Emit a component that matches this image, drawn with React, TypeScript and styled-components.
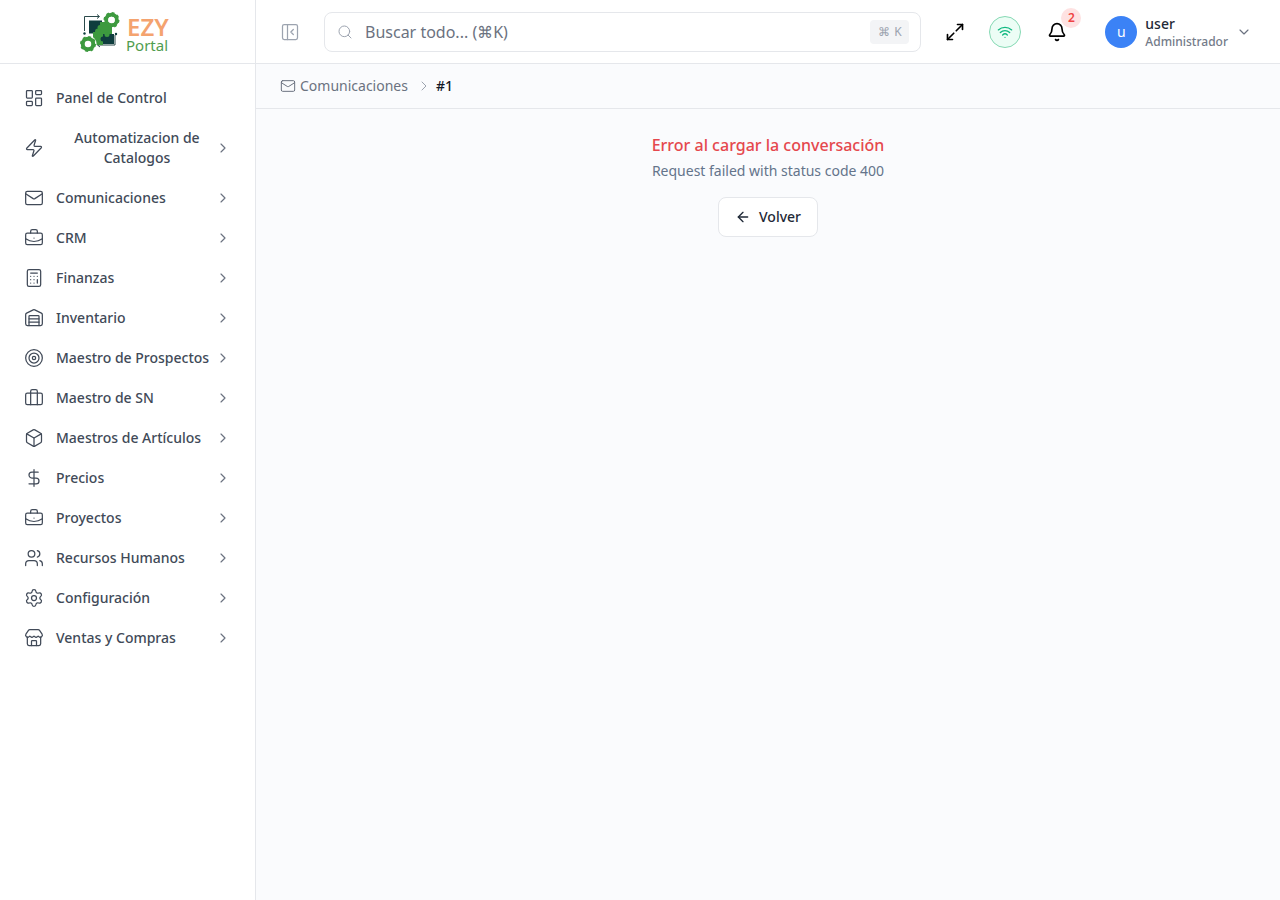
import styled, { createGlobalStyle } from 'styled-components';
import {
  ArrowLeft,
  Bell,
  Box,
  Briefcase,
  BriefcaseBusiness,
  Calculator,
  ChevronDown,
  ChevronRight,
  DollarSign,
  LayoutDashboard,
  LucideIcon,
  Mail,
  PanelLeftClose,
  Search,
  Settings,
  Store,
  Target,
  Users,
  Warehouse,
  Wifi,
  Zap,
} from 'lucide-react';

interface NavEntry {
  label: string;
  icon: LucideIcon;
  hasChildren?: boolean;
}

const navEntries: NavEntry[] = [
  { label: 'Panel de Control', icon: LayoutDashboard },
  { label: 'Automatizacion de Catalogos', icon: Zap, hasChildren: true },
  { label: 'Comunicaciones', icon: Mail, hasChildren: true },
  { label: 'CRM', icon: BriefcaseBusiness, hasChildren: true },
  { label: 'Finanzas', icon: Calculator, hasChildren: true },
  { label: 'Inventario', icon: Warehouse, hasChildren: true },
  { label: 'Maestro de Prospectos', icon: Target, hasChildren: true },
  { label: 'Maestro de SN', icon: Briefcase, hasChildren: true },
  { label: 'Maestros de Artículos', icon: Box, hasChildren: true },
  { label: 'Precios', icon: DollarSign, hasChildren: true },
  { label: 'Proyectos', icon: BriefcaseBusiness, hasChildren: true },
  { label: 'Recursos Humanos', icon: Users, hasChildren: true },
  { label: 'Configuración', icon: Settings, hasChildren: true },
  { label: 'Ventas y Compras', icon: Store, hasChildren: true },
];

const GlobalStyle = createGlobalStyle`
  * {
    box-sizing: border-box;
  }

  html,
  body {
    margin: 0;
    height: 100%;
    font-family: 'Noto Sans', 'Liberation Sans', sans-serif;
    background: #fafbfd;
  }
`;

const Layout = styled.div`
  display: flex;
  width: 100%;
  height: 900px;
  overflow: hidden;
`;

const Sidebar = styled.aside`
  width: 256px;
  flex-shrink: 0;
  background: #ffffff;
  border-right: 1px solid #e5e7eb;
  display: flex;
  flex-direction: column;
`;

const LogoBar = styled.div`
  height: 64px;
  border-bottom: 1px solid #e5e7eb;
  display: flex;
  align-items: center;
  justify-content: center;
  padding-right: 7px;
`;

const LogoWord = styled.text<{ $green?: boolean }>`
  font-family: 'Noto Sans', 'Liberation Sans', sans-serif;
  font-size: ${({ $green }) => ($green ? '15px' : '24px')};
  font-weight: ${({ $green }) => ($green ? 400 : 600)};
  fill: ${({ $green }) => ($green ? '#4f9d4f' : '#f4a36f')};
`;

const Nav = styled.nav`
  display: flex;
  flex-direction: column;
  padding: 14px 12px;
`;

const NavItem = styled.div`
  display: flex;
  align-items: center;
  min-height: 40px;
  padding: 0 12px;
  color: #414a58;
  font-size: 14px;
  line-height: 20px;
  font-weight: 500;

  svg {
    flex-shrink: 0;
  }
`;

const NavLabel = styled.span<{ $centered: boolean }>`
  flex: 1;
  margin-left: 12px;
  text-align: ${({ $centered }) => ($centered ? 'center' : 'left')};
  padding: ${({ $centered }) => ($centered ? '10px 0 10px 3px' : '0')};
`;

const NavChevron = styled(ChevronRight)`
  color: #6b7280;
`;

const Main = styled.div`
  flex: 1;
  min-width: 0;
  display: flex;
  flex-direction: column;
`;

const Header = styled.header`
  height: 64px;
  background: #ffffff;
  border-bottom: 1px solid #e5e7eb;
  display: flex;
  align-items: center;
  padding: 0 28px 0 24px;
`;

const ToggleButton = styled.div`
  display: flex;
  color: #9ca3af;
  margin-right: 24px;
`;

const SearchBox = styled.div`
  flex: 1;
  height: 40px;
  display: flex;
  align-items: center;
  border: 1px solid #e5e7eb;
  border-radius: 8px;
  padding: 0 11px 0 12px;
  color: #9ca3af;
  margin-right: 24px;
`;

const SearchPlaceholder = styled.span`
  flex: 1;
  margin-left: 12px;
  font-size: 16px;
  color: #6b7280;
`;

const Kbd = styled.kbd`
  height: 24px;
  width: 39px;
  display: flex;
  align-items: center;
  justify-content: center;
  gap: 4px;
  border-radius: 4px;
  background: #f3f4f6;
  color: #9ca3af;
  font-family: 'Noto Sans', 'Liberation Sans', sans-serif;
  font-size: 12px;
`;

const ExpandButton = styled.div`
  display: flex;
  color: #000000;
  margin: 0 24px 0 0;
`;

const StatusDot = styled.div`
  width: 32px;
  height: 32px;
  border-radius: 50%;
  display: flex;
  align-items: center;
  justify-content: center;
  background: #ecfdf5;
  border: 1px solid #86d9b4;
  color: #10b981;
  margin-right: 26px;
`;

const BellWrap = styled.div`
  position: relative;
  display: flex;
  color: #000000;
  margin-right: 38px;
`;

const BellBadge = styled.span`
  position: absolute;
  top: -14px;
  left: 14px;
  width: 20px;
  height: 20px;
  border-radius: 50%;
  background: #fee2e2;
  color: #ef4444;
  font-size: 12px;
  font-weight: 600;
  display: flex;
  align-items: center;
  justify-content: center;
`;

const Avatar = styled.div`
  width: 32px;
  height: 32px;
  border-radius: 50%;
  background: #3b82f6;
  color: #ffffff;
  font-size: 14px;
  display: flex;
  align-items: center;
  justify-content: center;
  margin-right: 8px;
`;

const UserInfo = styled.div`
  display: flex;
  flex-direction: column;
  margin-right: 8px;
  padding-top: 2px;
`;

const UserName = styled.span`
  font-size: 14px;
  line-height: 18px;
  font-weight: 500;
  color: #1f2937;
`;

const UserRole = styled.span`
  font-size: 12px;
  line-height: 17px;
  font-weight: 500;
  color: #737b88;
`;

const UserChevron = styled(ChevronDown)`
  color: #6b7280;
`;

const Breadcrumbs = styled.div`
  height: 45px;
  flex-shrink: 0;
  background: #fafbfd;
  border-bottom: 1px solid #e5e7eb;
  display: flex;
  align-items: center;
  padding: 0 24px;
  font-size: 14px;
  line-height: 20px;
  color: #6b7280;

  svg {
    flex-shrink: 0;
  }
`;

const CrumbLink = styled.span`
  margin-left: 4px;
`;

const CrumbSeparator = styled(ChevronRight)`
  color: #9ca3af;
  margin: 0 4px 0 8px;
`;

const CrumbCurrent = styled.span`
  color: #111827;
  font-weight: 500;
`;

const Content = styled.main`
  flex: 1;
  background: #fafbfd;
  padding-top: 24px;
  display: flex;
  flex-direction: column;
  align-items: center;
`;

const ErrorTitle = styled.h2`
  margin: 0;
  font-size: 16px;
  line-height: 24px;
  font-weight: 500;
  color: #e5484d;
`;

const ErrorDetail = styled.p`
  margin: 4px 0 0;
  font-size: 14px;
  line-height: 20px;
  color: #64748b;
`;

const BackButton = styled.button`
  margin-top: 16px;
  width: 100px;
  height: 40px;
  display: flex;
  align-items: center;
  justify-content: center;
  gap: 8px;
  padding: 0;
  background: #ffffff;
  border: 1px solid #e5e7eb;
  border-radius: 8px;
  color: #1f2937;
  font-family: inherit;
  font-size: 14px;
  line-height: 20px;
  font-weight: 500;
`;

function Gear({ x, y, r, color }: { x: number; y: number; r: number; color: string }) {
  const teethRadius = r - 0.9;
  const tooth = (2 * Math.PI * teethRadius) / 16;
  return (
    <g fill="none" stroke={color}>
      <circle cx={x} cy={y} r={r * 0.66} strokeWidth={r * 0.5} />
      <circle cx={x} cy={y} r={teethRadius} strokeWidth={1.8} strokeDasharray={`${tooth} ${tooth}`} />
    </g>
  );
}

function Logo() {
  const dark = '#0f3d3e';
  const green = '#3d9a3f';
  return (
    <svg width="92" height="47" viewBox="0 0 92 47" aria-label="EZY Portal">
      <g transform="translate(0 2)">
        <g fill="none" stroke="#2b4a4b" strokeWidth="1">
          <path d="M6.5 21V6.5H21" />
          <path d="M19 4.5l2.5 2-2.5 2" />
          <path d="M37 25v10H20" />
          <path d="M22 33l-2.5 2 2.5 2" />
        </g>
        <circle cx="6.5" cy="23.5" r="1.2" fill={dark} />
        <circle cx="38" cy="24" r="1.2" fill={dark} />
        <rect x="11" y="10.5" width="13" height="13" fill={dark} />
        <rect x="25" y="24" width="11" height="10" fill={dark} />
        <rect x="22" y="12" width="12" height="12" fill={green} />
        <rect x="15" y="22" width="10" height="13" fill={green} />
        <circle cx="22" cy="17.5" r="2.5" fill={green} />
        <circle cx="20" cy="21.5" r="3" fill={green} />
        <circle cx="29" cy="24.5" r="2.5" fill={green} />
        <circle cx="25" cy="29" r="2.5" fill={dark} />
        <Gear x={33.5} y={10} r={8} color={green} />
        <circle cx="33.5" cy="10" r="3.2" fill="#ffffff" />
        <circle cx="10" cy="34" r="8.6" fill="#ffffff" />
        <Gear x={10} y={34} r={8} color={green} />
        <LogoWord x="49" y="26">EZY</LogoWord>
        <LogoWord $green x="48" y="41">Portal</LogoWord>
      </g>
    </svg>
  );
}

function ExpandIcon() {
  return (
    <svg width="20" height="20" viewBox="0 0 24 24" fill="none" stroke="currentColor" strokeWidth="2" strokeLinecap="round" strokeLinejoin="round" aria-hidden="true">
      <path d="M15 3h6v6" />
      <path d="M21 3l-7.5 7.5" />
      <path d="M9 21H3v-6" />
      <path d="M3 21l7.5-7.5" />
    </svg>
  );
}

export default function App() {
  return (
    <>
      <GlobalStyle />
      <Layout>
        <Sidebar>
          <LogoBar>
            <Logo />
          </LogoBar>
          <Nav>
            {navEntries.map((entry) => (
              <NavItem key={entry.label}>
                <entry.icon size={20} strokeWidth={1.5} />
                <NavLabel $centered={entry.label.length > 24}>{entry.label}</NavLabel>
                {entry.hasChildren && <NavChevron size={16} strokeWidth={1.75} />}
              </NavItem>
            ))}
          </Nav>
        </Sidebar>
        <Main>
          <Header>
            <ToggleButton>
              <PanelLeftClose size={20} strokeWidth={1.5} />
            </ToggleButton>
            <SearchBox>
              <Search size={16} strokeWidth={1.5} />
              <SearchPlaceholder>Buscar todo... (⌘K)</SearchPlaceholder>
              <Kbd>
                <span>⌘</span>
                <span>K</span>
              </Kbd>
            </SearchBox>
            <ExpandButton>
              <ExpandIcon />
            </ExpandButton>
            <StatusDot>
              <Wifi size={16} strokeWidth={2} />
            </StatusDot>
            <BellWrap>
              <Bell size={20} strokeWidth={2} />
              <BellBadge>2</BellBadge>
            </BellWrap>
            <Avatar>u</Avatar>
            <UserInfo>
              <UserName>user</UserName>
              <UserRole>Administrador</UserRole>
            </UserInfo>
            <UserChevron size={16} strokeWidth={1.75} />
          </Header>
          <Breadcrumbs>
            <Mail size={16} strokeWidth={1.5} />
            <CrumbLink>Comunicaciones</CrumbLink>
            <CrumbSeparator size={16} strokeWidth={1.5} />
            <CrumbCurrent>#1</CrumbCurrent>
          </Breadcrumbs>
          <Content>
            <ErrorTitle>Error al cargar la conversación</ErrorTitle>
            <ErrorDetail>Request failed with status code 400</ErrorDetail>
            <BackButton>
              <ArrowLeft size={16} strokeWidth={2} />
              Volver
            </BackButton>
          </Content>
        </Main>
      </Layout>
    </>
  );
}
